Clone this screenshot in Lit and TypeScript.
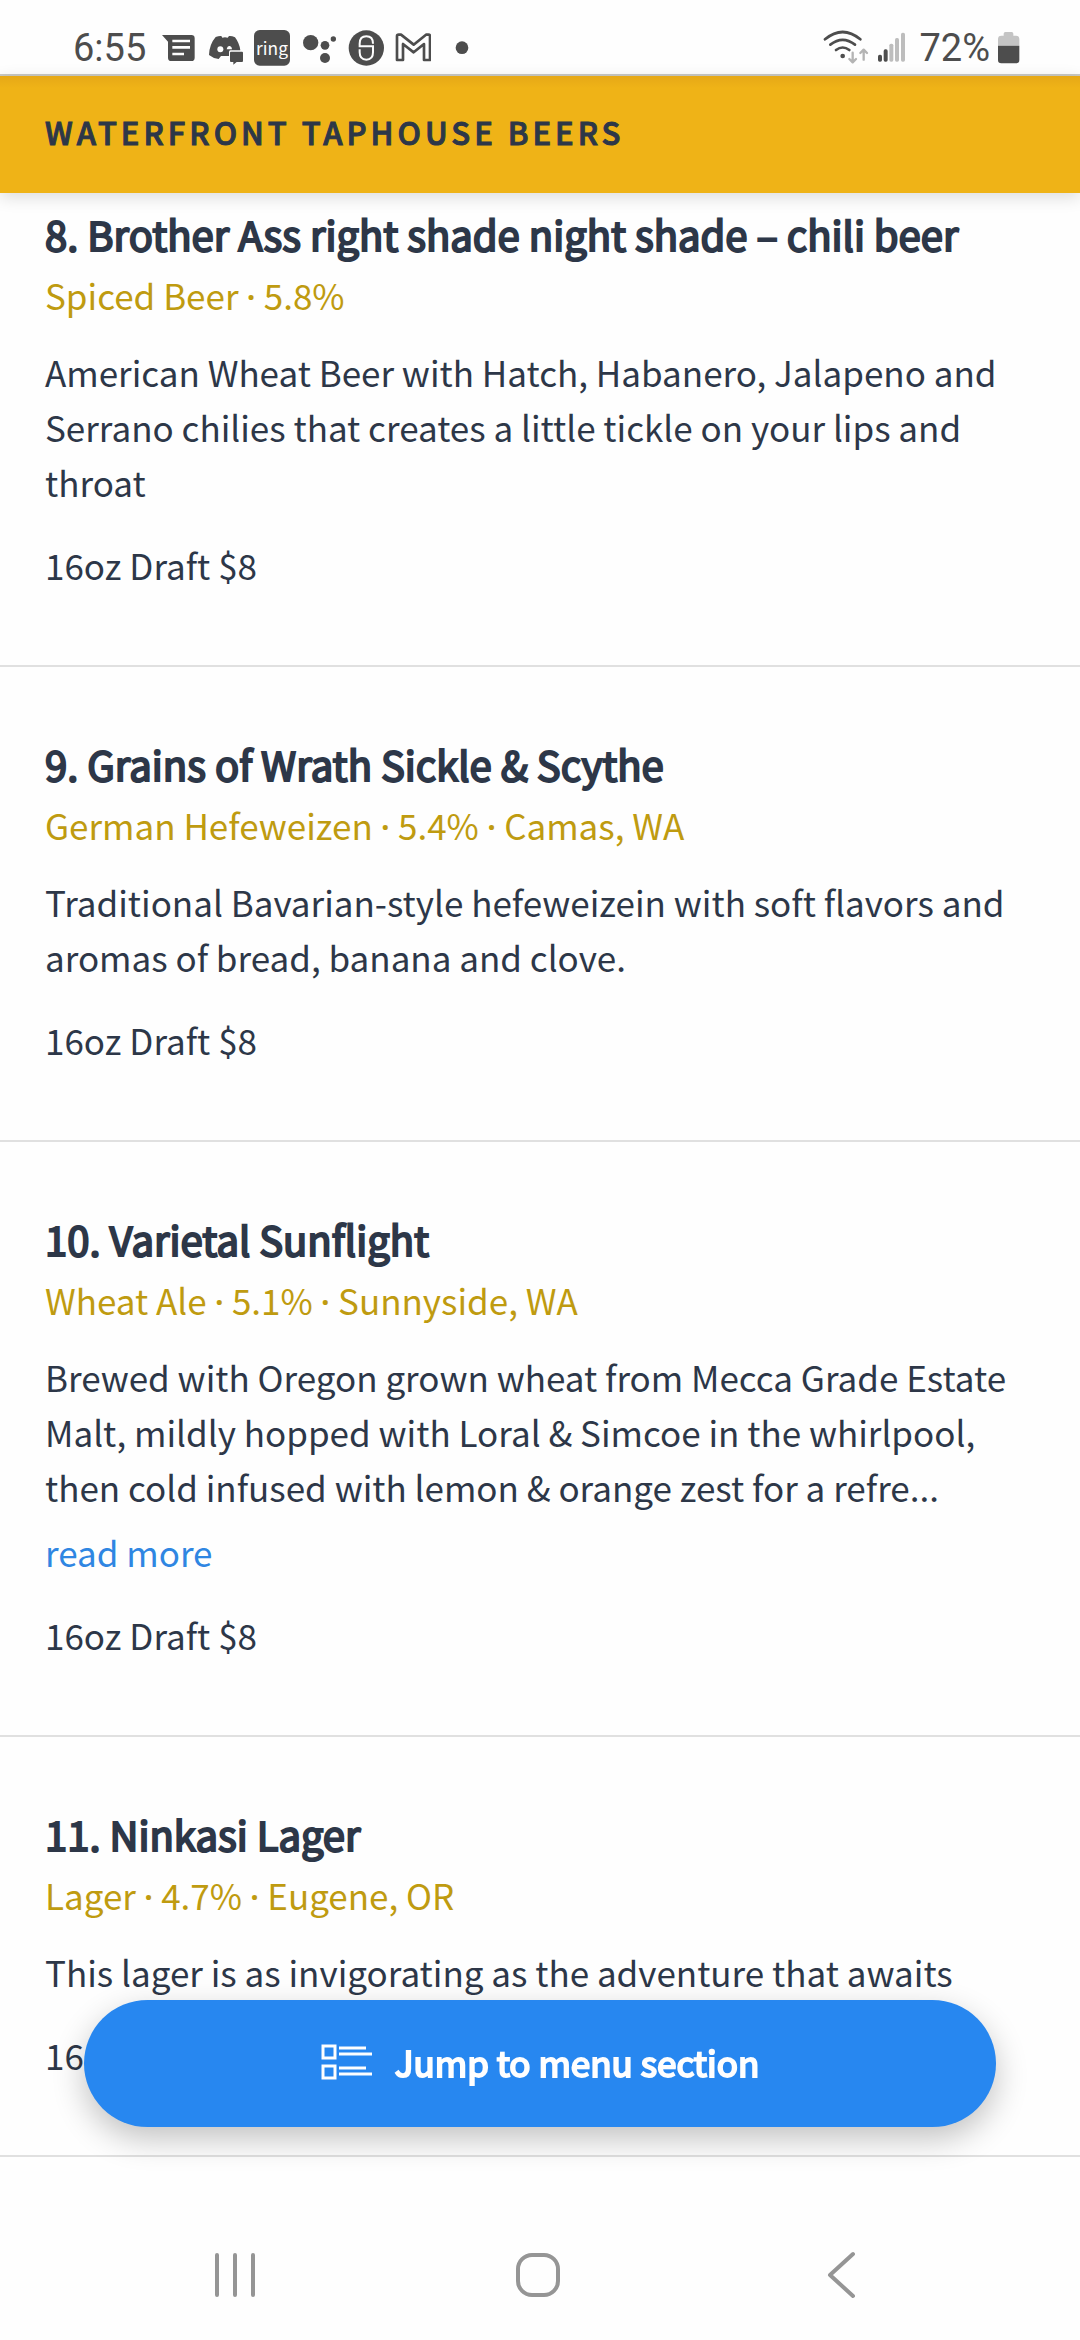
import { LitElement, html, css, svg, nothing } from "lit";
import { customElement, property } from "lit/decorators.js";

interface Beer {
  no: number;
  name: string;
  meta: string[];
  text: string;
  truncated?: boolean;
  price: string;
}

const BEERS: Beer[] = [
  {
    no: 8,
    name: "Brother Ass right shade night shade – chili beer",
    meta: ["Spiced Beer", "5.8%"],
    text: "American Wheat Beer with Hatch, Habanero, Jalapeno and Serrano chilies that creates a little tickle on your lips and throat",
    price: "16oz Draft $8",
  },
  {
    no: 9,
    name: "Grains of Wrath Sickle & Scythe",
    meta: ["German Hefeweizen", "5.4%", "Camas, WA"],
    text: "Traditional Bavarian-style hefeweizein with soft flavors and aromas of bread, banana and clove.",
    price: "16oz Draft $8",
  },
  {
    no: 10,
    name: "Varietal Sunflight",
    meta: ["Wheat Ale", "5.1%", "Sunnyside, WA"],
    text: "Brewed with Oregon grown wheat from Mecca Grade Estate Malt, mildly hopped with Loral & Simcoe in the whirlpool, then cold infused with lemon & orange zest for a refre...",
    truncated: true,
    price: "16oz Draft $8",
  },
  {
    no: 11,
    name: "Ninkasi Lager",
    meta: ["Lager", "4.7%", "Eugene, OR"],
    text: "This lager is as invigorating as the adventure that awaits",
    price: "16oz Draft $8",
  },
];

@customElement("status-bar")
class StatusBar extends LitElement {
  static styles = css`
    :host {
      display: block;
      background: #fefefe;
      color: #4d4d4d;
    }
    .bar {
      display: flex;
      justify-content: space-between;
      box-sizing: border-box;
      height: 76px;
      padding: 28px 60px 0 73px;
      border-bottom: 2px solid #c9c9c4;
      font: 38px/40px Roboto, sans-serif;
    }
    .group {
      display: flex;
      align-items: center;
      gap: 11px;
      height: 40px;
    }
    .time {
      margin-right: 3px;
    }
    .right {
      gap: 8px;
    }
    .level {
      margin-left: 5px;
    }
    svg {
      display: block;
      height: 40px;
      fill: currentColor;
    }
    .app {
      width: 36px;
    }
    .wifi {
      width: 46px;
    }
    .signal {
      width: 29px;
    }
    .battery {
      width: 22px;
    }
    .ring {
      font: 52px "Noto Sans CJK SC", sans-serif;
      fill: #fefefe;
    }
  `;

  render() {
    return html`<div class="bar">
      <div class="group">
        <span class="time">6:55</span>
        <svg class="app" viewBox="330 55 108 120">
          <path d="M336 76H424Q434 76 434 86V144Q434 154 424 154H364Q354 154 354 144V96Z" />
          <path d="M367 94H420M367 113H420M367 133H402" stroke="#fefefe" stroke-width="8" />
        </svg>
        <svg class="app" viewBox="471 55 108 120">
          <path
            d="M497 82Q507 78 514 79L517 84Q525 82 533 84L537 79Q545 78 555 83Q568 100 571 122H541Q537 122 537 127V139H513L506 148Q489 146 477 136Q478 104 497 82Z"
          />
          <circle cx="511" cy="119" r="9" fill="#fefefe" />
          <path d="M530 119Q532 108 540 109Q546 111 546 119Z" fill="#fefefe" />
          <path d="M543 126H576Q579 126 579 129V154Q579 157 576 157H560L550 165V157H543Q540 157 540 154V129Q540 126 543 126Z" />
        </svg>
        <svg class="app" viewBox="612 55 108 120">
          <rect x="612" y="61" width="108" height="107" rx="17" />
          <text class="ring" x="666" y="135" text-anchor="middle">ring</text>
        </svg>
        <svg class="app" viewBox="753 55 108 120">
          <circle cx="782" cy="99" r="23" />
          <circle cx="825" cy="107" r="13" />
          <circle cx="850" cy="88" r="8" />
          <circle cx="825" cy="145" r="15" />
        </svg>
        <svg class="app" viewBox="894 55 108 120">
          <circle cx="949" cy="115" r="53" />
          <path
            d="M969 102Q969 80 949 80Q929 80 929 102V110H969V128Q969 150 949 150Q929 150 929 128V119"
            fill="none"
            stroke="#fefefe"
            stroke-width="6"
          />
        </svg>
        <svg class="app" viewBox="1035 55 108 120">
          <path
            d="M1041 79Q1041 75 1046 75H1053L1091 105L1128 75H1135Q1140 75 1140 79V151H1122V103L1091 128L1059 103V151H1041Z"
            fill="none"
            stroke="currentColor"
            stroke-width="8"
            stroke-linejoin="round"
          />
        </svg>
        <svg class="app" viewBox="1176 55 108 120"><circle cx="1236" cy="114" r="19" /></svg>
      </div>
      <div class="group right">
        <svg class="wifi" viewBox="66 55 138 120">
          <g fill="none" stroke="currentColor" stroke-width="8" stroke-linecap="round">
            <path d="M72 89Q125 45 178 89" />
            <path d="M88 105Q125 76 162 105" />
            <path d="M105 121Q125 106 145 121" />
          </g>
          <circle cx="125" cy="139" r="7" />
          <g fill="none" stroke="#b4b4b4" stroke-width="7" stroke-linecap="round" stroke-linejoin="round">
            <path d="M155 129V157M145 148L155 158L165 148" />
            <path d="M188 150V121M178 130L188 120L198 130" />
          </g>
        </svg>
        <svg class="signal" viewBox="228 55 87 120">
          <rect x="231" y="135" width="12" height="21" rx="5" />
          <rect x="248" y="119" width="12" height="37" rx="5" />
          <g fill="#bdbdbd">
            <rect x="265" y="102" width="12" height="54" rx="5" />
            <rect x="282" y="85" width="12" height="71" rx="5" />
            <rect x="300" y="69" width="12" height="87" rx="5" />
          </g>
        </svg>
        <span class="level">72%</span>
        <svg class="battery" viewBox="591 55 66 120">
          <path
            d="M608 72Q608 67 613 67H632Q637 67 637 72V78H645Q655 78 655 88V108H591V88Q591 78 601 78H608Z"
            fill="#c4c4c4"
          />
          <path d="M591 108H655V151Q655 161 645 161H601Q591 161 591 151Z" />
        </svg>
      </div>
    </div>`;
  }
}

@customElement("beer-item")
class BeerItem extends LitElement {
  @property({ attribute: false }) beer!: Beer;

  static styles = css`
    :host {
      display: block;
      padding: 68px 45px 73px;
      border-bottom: 2px solid #e0e0e0;
    }
    h2,
    p {
      margin: 0;
      font-weight: 400;
    }
    .name {
      font-size: 40px;
      line-height: 58px;
      -webkit-text-stroke: 2px currentColor;
    }
    .meta {
      margin-top: 4px;
      color: #bf9b10;
    }
    .dot {
      font-family: "Open Sans", sans-serif;
      font-weight: 600;
      line-height: 1;
    }
    .text {
      margin-top: 22px;
    }
    .more {
      display: block;
      width: fit-content;
      margin-top: 10px;
      color: #2f86e2;
      text-decoration: none;
    }
    .price {
      margin-top: 28px;
    }
  `;

  render() {
    const b = this.beer;
    return html`
      <h2 class="name">${b.no}. ${b.name}</h2>
      <p class="meta">${b.meta.map((m, i) => (i ? html` <span class="dot">·</span> ${m}` : m))}</p>
      <p class="text">${b.text}</p>
      ${b.truncated ? html`<a class="more" href="#more">read more</a>` : nothing}
      <p class="price">${b.price}</p>
    `;
  }
}

@customElement("nav-bar")
class NavBar extends LitElement {
  static styles = css`
    nav {
      display: grid;
      grid-template-columns: repeat(3, 1fr);
      height: 130px;
      padding: 0 88px 0 84px;
      background: #fefefe;
    }
    button {
      display: flex;
      align-items: center;
      justify-content: center;
      padding: 0;
      border: 0;
      background: none;
      color: #959595;
    }
    svg {
      width: 48px;
      height: 48px;
      fill: none;
      stroke: currentColor;
      stroke-width: 4;
      stroke-linecap: round;
      stroke-linejoin: round;
    }
  `;

  render() {
    const key = (label: string, shape: unknown) =>
      html`<button aria-label=${label}><svg viewBox="0 0 48 48">${shape}</svg></button>`;
    return html`<nav>
      ${key("Recents", svg`<path d="M6 4V44M24 4V44M42 4V44" />`)}
      ${key("Home", svg`<rect x="4" y="4" width="40" height="40" rx="14" />`)}
      ${key("Back", svg`<path d="M36 3L13 24L36 45" />`)}
    </nav>`;
  }
}

@customElement("app-root")
class AppRoot extends LitElement {
  static styles = css`
    :host {
      display: flex;
      flex-direction: column;
      min-height: 100vh;
      background: #fefefe;
      color: #2d3748;
      font: 35px/55px "Noto Sans CJK SC", sans-serif;
    }
    header {
      position: relative;
      padding: 28px 45px 34px;
      background: linear-gradient(#e6a817, #efb317 12px);
      box-shadow: 0 4px 16px rgba(0, 0, 0, 0.14);
    }
    h1 {
      margin: 0;
      font-size: 31px;
      line-height: 55px;
      font-weight: 500;
      letter-spacing: 4px;
      text-transform: uppercase;
      -webkit-text-stroke: 1px currentColor;
    }
    .first {
      padding-top: 12px;
    }
    nav-bar {
      margin-top: auto;
    }
    .jump {
      position: fixed;
      left: 84px;
      right: 84px;
      bottom: 213px;
      display: flex;
      align-items: center;
      justify-content: center;
      gap: 22px;
      height: 127px;
      padding: 0 0 4px;
      border: 0;
      border-radius: 64px;
      background: #2787f0;
      box-shadow: 0 12px 32px rgba(0, 0, 0, 0.24);
      color: #fefefe;
      font: 400 35px/55px "Noto Sans CJK SC", sans-serif;
      -webkit-text-stroke: 2px currentColor;
    }
    .jump svg {
      width: 52px;
      height: 38px;
      fill: none;
      stroke: currentColor;
      stroke-width: 3;
    }
  `;

  render() {
    return html`
      <status-bar></status-bar>
      <header><h1>Waterfront Taphouse Beers</h1></header>
      <main>
        ${BEERS.map((b, i) => html`<beer-item class=${i ? "" : "first"} .beer=${b}></beer-item>`)}
      </main>
      <nav-bar></nav-bar>
      <button class="jump">
        <svg viewBox="0 0 52 38" aria-hidden="true">
          <path d="M2 3H14V15H2ZM2 23H14V35H2Z" />
          <path d="M18 5H45M18 11H51M18 25H45M18 31H51" />
        </svg>
        Jump to menu section
      </button>
    `;
  }
}
